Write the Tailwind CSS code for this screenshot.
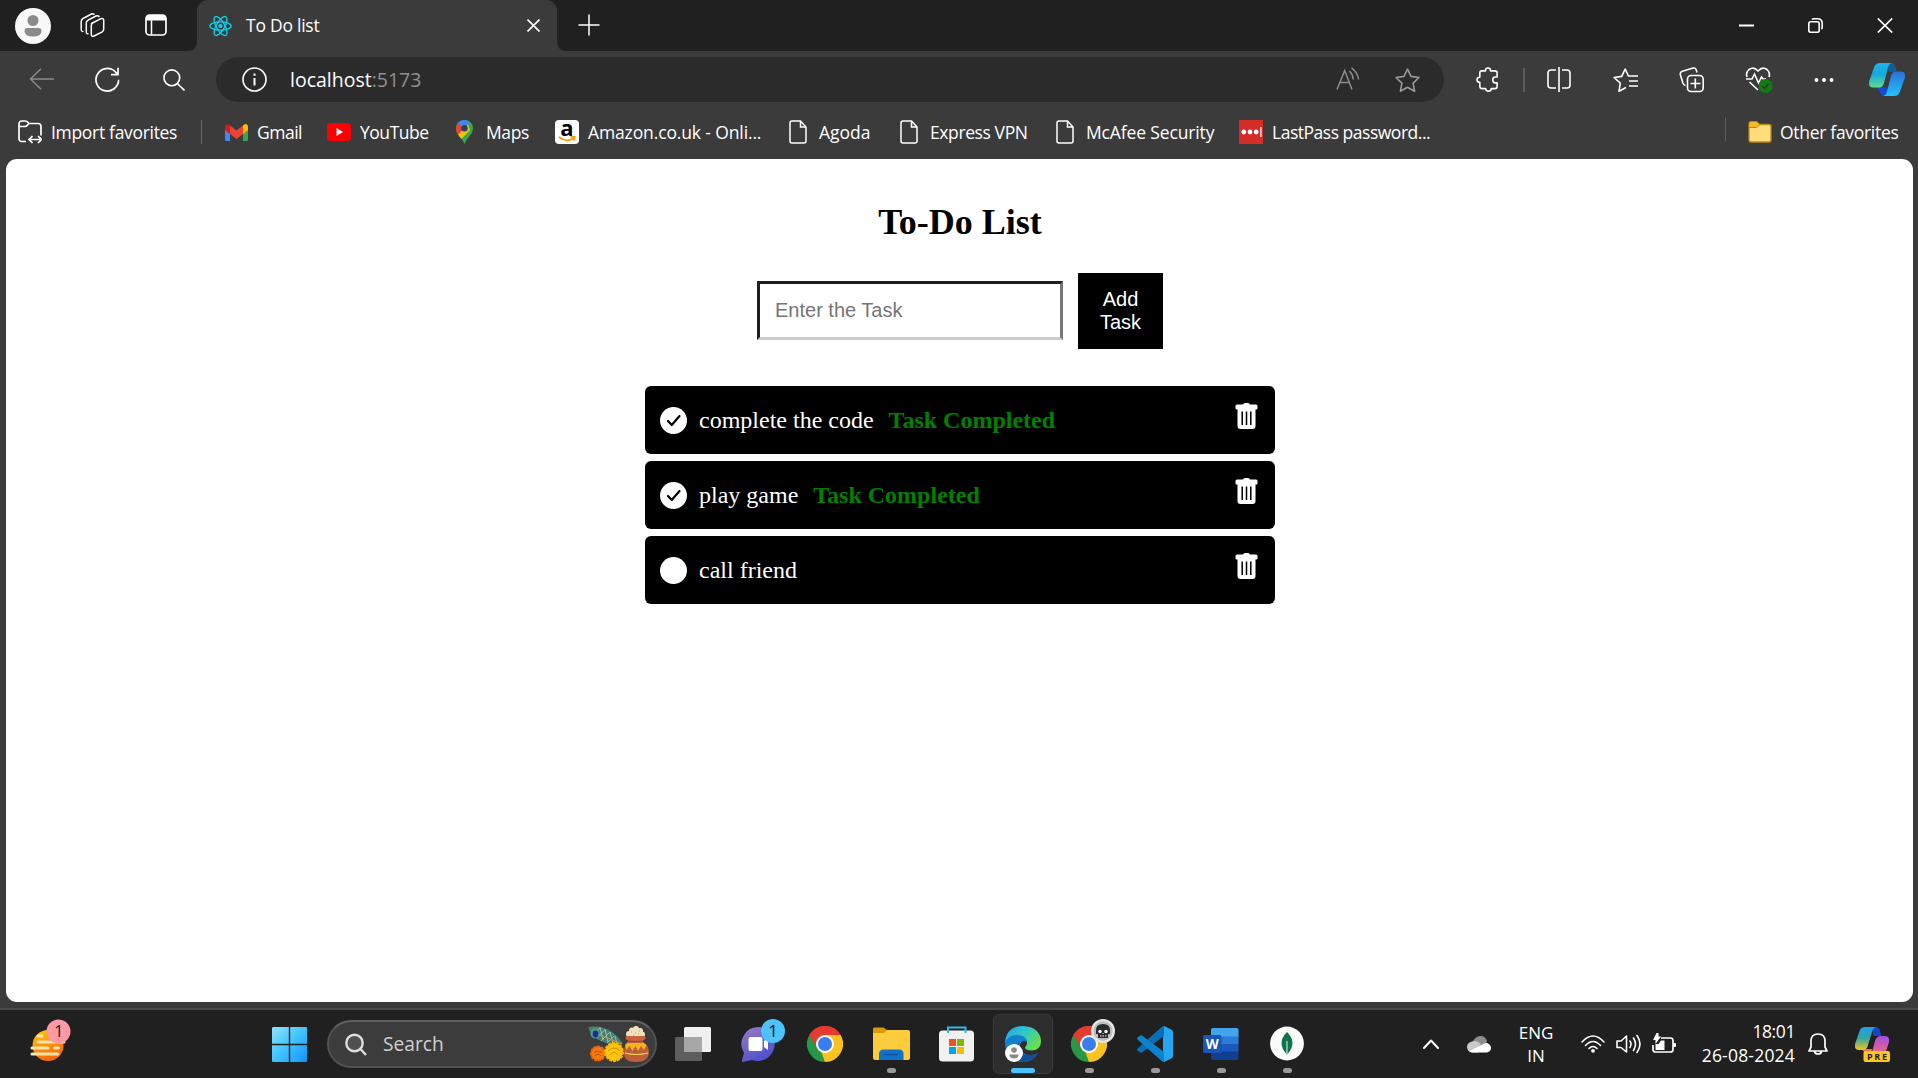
<!DOCTYPE html>
<html lang="en">
<head>
<meta charset="utf-8">
<title>To Do list</title>
<script src="https://cdn.jsdelivr.net/npm/@tailwindcss/browser@4"></script>
</head>
<body class="w-[1918px] h-[1078px] overflow-hidden flex flex-col bg-[#3b3b3b] text-white font-['Open_Sans','Noto_Sans',sans-serif] text-[17.5px]">

<svg class="hidden">
  <defs>
    <symbol id="file" viewBox="0 0 18 24"><path d="M3 1h8.500L17 7v14a2 2 0 0 1-2 2H3a2 2 0 0 1-2-2V3a2 2 0 0 1 2-2ZM11.500 1v6H17" fill="none" stroke="#fff" stroke-width="1.500"/></symbol>
    <symbol id="chrome" viewBox="0 0 36 36">
      <path d="M18 18 2.400 9A18 18 0 0 1 33.600 9Z" fill="#e33b2e"/>
      <path d="M18 18 33.600 9A18 18 0 0 1 18 36Z" fill="#fcc31e"/>
      <path d="M18 18V36A18 18 0 0 1 2.400 9Z" fill="#279847"/>
      <path d="M18 9h15.600L25.800 22.500Z" fill="#fcc31e"/><path d="M25.800 22.500 18 36l-4-11Z" fill="#fcc31e"/><path d="M10.200 22.500 2.400 9 14 9Z" fill="#279847"/><path d="M18 9H33.600A18 18 0 0 0 2.400 9L10.200 22.500Z" fill="#e33b2e"/>
      <circle cx="18" cy="18" r="9" fill="#fff"/><circle cx="18" cy="18" r="7" fill="#3b7ded"/>
    </symbol>
    <symbol id="trash" viewBox="0 0 23 26"><path d="M8 1.500Q8.500 0 10 0h3q1.500 0 2 1.500h6q1.500 0 1.500 1.500v2.500q0 1-1 1h-1V23q0 3-3 3h-12q-3 0-3-3V6.500h-1q-1 0-1-1V3q0-1.500 1.500-1.500Z" fill="#fff"/><path d="M7.200 8.500v13.500M11.500 8.500v13.500M15.800 8.500v13.500" stroke="#000" stroke-width="1.500"/></symbol>
    <symbol id="done" viewBox="0 0 27 27"><circle cx="13.500" cy="13.500" r="13.500" fill="#fff"/><path d="m8 14 3.800 4 7.700-9" fill="none" stroke="#000" stroke-width="2.200" stroke-linecap="round" stroke-linejoin="round"/></symbol>
  </defs>
</svg>

<!-- Tab strip -->
<header class="h-[51px] shrink-0 bg-[#202020] flex items-center">
  <svg class="ml-[15px] w-9 h-9 shrink-0" viewBox="0 0 36 36"><circle cx="18" cy="18" r="18" fill="#f8f8f8"/><circle cx="18" cy="12.500" r="5.500" fill="#8b8b8b"/><path d="M9.500 23q0-3 3-3h11q3 0 3 3 0 5.500-8.500 5.500T9.500 23Z" fill="#8b8b8b"/></svg>
  <svg class="ml-[29px] mb-px w-[25px] h-6 shrink-0" viewBox="0 0 25 24" fill="none" stroke="#fff" stroke-width="1.500" stroke-linejoin="round" stroke-linecap="round"><path d="m11.500 10.500 9-4.700q3-1 3.200 1.500v9q0 1.500-1.500 2.500L14 23q-2.500 1-2.700-1.500v-9q0-1.500 1.500-2.300Z"/><path d="M19 3.500Q18 2.200 16 3L8 7.200Q6.300 8 6.300 10v9.500q.2 1.300 1.700 1.200"/><path d="M14 1.300Q13 .5 11.500 1L3 5.500Q1.200 6.500 1.200 8.500v8.500q.2 1.500 1.700 1.500"/></svg>
  <svg class="ml-[40px] mb-px w-[22px] h-[22px] shrink-0" viewBox="0 0 22 22"><rect x="1" y="1" width="20" height="20" rx="3.500" fill="none" stroke="#fff" stroke-width="1.700"/><path d="M1 6.500V4q0-3 3-3h14q3 0 3 3v2.500Z" fill="#fff"/><path d="M6.500 6v15" stroke="#fff" stroke-width="1.500"/></svg>
  <div class="ml-5 w-[380px] h-[51px] flex items-center shrink-0">
    <svg class="w-2.5 h-[51px] shrink-0" viewBox="0 0 10 51"><path d="M0 51q10 0 10-10V51Z" fill="#3b3b3b"/></svg>
    <div class="w-[360px] h-full bg-[#3b3b3b] rounded-t-[11px] flex items-center">
      <svg class="ml-3 w-[23px] h-[22px]" viewBox="0 0 23 22" fill="none" stroke="#0fd0ee" stroke-width="1.300"><ellipse cx="11.500" cy="11" rx="10.700" ry="4.200"/><ellipse cx="11.500" cy="11" rx="10.700" ry="4.200" transform="rotate(60 11.500 11)"/><ellipse cx="11.500" cy="11" rx="10.700" ry="4.200" transform="rotate(120 11.500 11)"/><circle cx="11.500" cy="11" r="2.100" fill="#0fd0ee" stroke="none"/></svg>
      <span class="ml-[14px] pb-0.5 tracking-[-0.25px] leading-6 whitespace-nowrap">To Do list</span>
      <svg class="ml-auto mr-[17px] w-[13px] h-[13px]" viewBox="0 0 13 13"><path d="m.5.500 12 12M12.500.500l-12 12" stroke="#fff" stroke-width="1.600"/></svg>
    </div>
    <svg class="w-2.5 h-[51px] shrink-0" viewBox="0 0 10 51"><path d="M10 51Q0 51 0 41V51Z" fill="#3b3b3b"/></svg>
  </div>
  <svg class="ml-[11px] mb-0.5 w-[22px] h-[22px]" viewBox="0 0 22 22"><path d="M11 .5v21M.5 11h21" stroke="#fff" stroke-width="1.500"/></svg>
  <div class="ml-auto mr-[25px] mb-px flex items-center gap-[54px]">
    <svg class="w-[15px] h-[15px]" viewBox="0 0 15 15"><path d="M0 7.500h15" stroke="#fff" stroke-width="2"/></svg>
    <svg class="w-[15px] h-[15px]" viewBox="0 0 15 15" fill="none" stroke="#fff" stroke-width="1.600"><rect x=".8" y="3.800" width="10.400" height="10.400" rx="2"/><path d="M4 1.500Q4.500.8 6 .8h3.500q4.700 0 4.700 4.700V9q0 1.500-.8 2"/></svg>
    <svg class="w-[16px] h-[15px]" viewBox="0 0 16 15"><path d="m.8.500 14.400 14M15.200.500.8 14.500" stroke="#fff" stroke-width="1.700"/></svg>
  </div>
</header>

<!-- Toolbar -->
<nav class="h-[57px] shrink-0 flex items-center">
  <svg class="ml-[29px] mb-px w-[25px] h-[22px]" viewBox="0 0 25 22" fill="none" stroke="#8a8a8a" stroke-width="1.500"><path d="M25 11H1.500M12 .8 1.500 11 12 21.200"/></svg>
  <svg class="ml-[41px] w-[25px] h-[25px]" viewBox="0 0 25 25" fill="none" stroke="#fff" stroke-width="1.700"><path d="M23.600 12.800A11.300 11.300 0 1 1 20.500 5L23 7.500M23 .8v6.900h-7"/></svg>
  <svg class="ml-[43px] w-[22px] h-[22px]" viewBox="0 0 22 22" fill="none" stroke="#fff" stroke-width="1.600"><circle cx="8.800" cy="8.800" r="7.900"/><path d="m14.300 14.500 7.200 7"/></svg>
  <div class="ml-[31px] w-[1228px] h-[45px] rounded-full bg-[#2b2b2b] flex items-center">
    <svg class="ml-[26px] w-[25px] h-[25px]" viewBox="0 0 25 25" fill="none" stroke="#fff" stroke-width="1.600"><circle cx="12.500" cy="12.500" r="11.500"/><path d="M12.500 11v7.500M12.500 6.500v2.200" stroke-width="2"/></svg>
    <span class="ml-[23px] text-[19.5px] leading-none">localhost<span class="text-[#8f8f8f]">:5173</span></span>
    <svg class="ml-auto mb-0.5 w-[24px] h-[23px]" viewBox="0 0 24 23" fill="none" stroke="#8c8c8c" stroke-width="1.500"><path d="m1 22.500 7.700-19 7.300 19M3.700 15.500h9.700M13.500 4q3.500 3.500 3.800 8.500M15.500.8q6.500 5 7 11.700"/></svg>
    <svg class="ml-[35px] mr-6 w-[25px] h-[24px]" viewBox="0 0 25 24" fill="none" stroke="#9a9a9a" stroke-width="1.600" stroke-linejoin="round"><path d="m12.500 1 3.500 7.400 8 1.100-5.900 5.700 1.500 8-7.100-3.900-7.100 3.900 1.500-8L1 9.500l8-1.100Z"/></svg>
  </div>
  <svg class="ml-[32px] w-[24px] h-[25px]" viewBox="0 0 25 26" fill="none" stroke="#fff" stroke-width="1.600" stroke-linejoin="round"><path d="M4 6q0-2 2-2h4q-.5-3 2.500-3T15 4h4.500Q22 4 22 6v4.500h-2q-2.500 0-2.500 3t2.500 3h2V20q0 2.500-2.500 2.500H16q0 2.700-3 2.700t-3-2.700H6.500Q4 22.500 4 20v-4q-3 0-3-2.700t3-2.700Z"/></svg>
  <div class="ml-[23px] w-0.5 h-6 bg-[#5b5b5b]"></div>
  <svg class="ml-[22px] w-6 h-[25px]" viewBox="0 0 24 25" fill="none" stroke="#fff" stroke-width="1.600"><path d="M12 0v25M9 3H4Q1 3 1 6v12q0 3 3 3h5M15 3h5q3 0 3 3v12q0 3-3 3h-5"/></svg>
  <svg class="ml-[42px] w-[25px] h-[24px]" viewBox="0 0 25 24" fill="none" stroke="#fff" stroke-width="1.600" stroke-linejoin="round"><path d="m13 19.500-7 3.700 1.300-8L1 9.500l7.700-1.100L12.200 1l3.200 7H24M16 13h9M16 18h9M15 8h10" /></svg>
  <svg class="ml-[41px] w-[25px] h-[26px]" viewBox="0 0 25 26" fill="none" stroke="#fff" stroke-width="1.600"><rect x="8.500" y="8.500" width="15.700" height="16" rx="3.500"/><path d="M16.300 11.500v10M11.500 16.500h10M18 5.500l-.8-2.700q-.8-2.300-3-1.700L3.300 4.300Q.8 5 1.300 7.500l2.600 8.500q.8 2.300 2.600 2.500"/></svg>
  <svg class="ml-[41px] w-[28px] h-[26px]" viewBox="0 0 28 26" fill="none" stroke="#fff" stroke-width="1.600"><path d="M2 10Q.5 5.500 4 2.500q5-3.500 9 1.500 4.500-5 9-1.500 3.500 3 2 7.500M1 12h6l2.500-5 4 9 3-6 1.500 2h3M4.500 15l8.500 8"/><circle cx="20.500" cy="19" r="7" fill="#107c10" stroke="none"/><path d="m17.300 19.200 2.300 2.300 4-4.600" stroke="#333" stroke-width="1.500"/></svg>
  <svg class="ml-[41px] w-5 h-1.5" viewBox="0 0 20 6" fill="#fff"><circle cx="2.500" cy="3" r="2"/><circle cx="10" cy="3" r="2"/><circle cx="17.500" cy="3" r="2"/></svg>
  <svg class="ml-[35px] w-9 h-[33px]" viewBox="0 0 36 33"><defs><linearGradient id="cp1" x1="0" y1="0" x2="0" y2="1"><stop offset="0" stop-color="#1fb4ea"/><stop offset=".45" stop-color="#12a8dd"/><stop offset="1" stop-color="#5fdc8f"/></linearGradient><linearGradient id="cp2" x1="0" y1="0" x2="0" y2="1"><stop offset="0" stop-color="#2a6fd8"/><stop offset="1" stop-color="#22c3fb"/></linearGradient></defs><path d="M17 0h5q3.500 0 4.500 4l1.200 5H20Z" fill="#125d93"/><path d="M8.500 24h8l4 4-2 5h-3q-3.500 0-4.500-3.500Z" fill="#174ad8"/><path d="M11 0h12q-3 .5-4 4.500l-4 15.500q-1.200 4.500-5 4.500H4Q-1 24.500.3 18L5 4.500Q6.500 0 11 0Z" fill="url(#cp1)"/><path d="M25 33H14q3-.5 4-4.500L22 13q1.200-4.500 5-4.500h5q5 0 3.700 6.500L31 28.500Q29.500 33 25 33Z" fill="url(#cp2)"/></svg>
</nav>

<!-- Favorites bar -->
<nav class="h-[51px] shrink-0 flex items-center pb-[3px] whitespace-nowrap leading-6">
  <div class="ml-[18px] w-[183px] flex items-center gap-[9px] tracking-[-0.31px]">
    <svg class="w-6 h-6" viewBox="0 0 24 24" fill="none" stroke="#fff" stroke-width="1.700"><path d="M8 21.500H4q-3 0-3-3V4q0-3 3-3h3q2 0 3 1.500l1 1h9q3 0 3 3v9M1 6.500h6q1.500 0 2.500-1.500l1.500-1.500M12 19.500h11M14.500 16l-3.500 3.500 3.500 3.500M20 16l3.500 3.500L20 23"/></svg>
    <span class="pb-px">Import favorites</span>
  </div>
  <div class="w-px h-6 bg-[#666]"></div>
  <div class="ml-[23px] w-[102px] flex items-center gap-[9px] tracking-[-0.5px]">
    <svg class="w-[23px] h-[17px]" viewBox="0 0 23 17"><path d="M0 3v12.500Q0 17 1.500 17H5V6Z" fill="#4285f4"/><path d="M23 3v12.500q0 1.500-1.500 1.500H18V6Z" fill="#34a853"/><path d="M18 1.500 20 0q3 0 3 3v3l-5 4Z" fill="#fbbc04"/><path d="M5 1.500 3 0Q0 0 0 3v3l5 4Z" fill="#c5221f"/><path d="M3 0q1 0 2 1.500l6.500 5 6.500-5Q19 0 20 0l-2 1.500V10l-6.500 5L5 10V1.500Z" fill="#ea4335"/></svg>
    <span class="pb-px">Gmail</span>
  </div>
  <div class="w-[129px] flex items-center gap-[9px] tracking-[-0.47px]">
    <svg class="w-6 h-[18px]" viewBox="0 0 24 18"><rect width="24" height="18" rx="4" fill="#f00"/><path d="M9.500 5v8l6.500-4Z" fill="#fff"/></svg>
    <span class="pb-px">YouTube</span>
  </div>
  <div class="w-[99px] flex items-center gap-[13px] tracking-[-0.37px]">
    <svg class="w-[17px] h-6" viewBox="0 0 17 24"><path d="M8.500 0Q17 .5 17 8.500q0 3.500-3.500 7.500-3.500 4-5 8-1.500-4-4-6.500Q0 13 0 8.500 0 .5 8.500 0Z" fill="#34a853"/><path d="M2 14.500 12 4l2 6-8.500 9Q3 16.500 2 14.500Z" fill="#fbbc04"/><path d="M2 3Q0 5 0 8.500q0 3 2 6L8.500 8Z" fill="#ea4335"/><path d="M2 3q2.500-3 6.500-3 3 0 5.500 2L8 9Z" fill="#4285f4"/><circle cx="8.500" cy="8.300" r="3.200" fill="#2c3f67"/></svg>
    <span class="pb-px">Maps</span>
  </div>
  <div class="w-[234px] flex items-center gap-[9px] tracking-[-0.13px]">
    <span class="w-6 h-6 rounded bg-white text-black relative flex justify-center"><b class="text-[22px] leading-[15px] tracking-normal">a</b><svg class="absolute left-[3px] bottom-0.5 w-[18px] h-[6px]" viewBox="0 0 18 6" fill="none" stroke="#f90" stroke-width="1.700"><path d="M1 1q7 6 14 1.500M12.500 1l4-.2-1 4"/></svg></span>
    <span class="pb-px">Amazon.co.uk - Onli...</span>
  </div>
  <div class="w-[111px] flex items-center gap-3"><svg class="w-[18px] h-6"><use href="#file"/></svg><span class="pb-px">Agoda</span></div>
  <div class="w-[156px] flex items-center gap-3 tracking-[-0.4px]"><svg class="w-[18px] h-6"><use href="#file"/></svg><span class="pb-px">Express VPN</span></div>
  <div class="w-[183px] flex items-center gap-3 tracking-[-0.14px]"><svg class="w-[18px] h-6"><use href="#file"/></svg><span class="pb-px">McAfee Security</span></div>
  <div class="flex items-center gap-[9px] tracking-[-0.48px]">
    <svg class="w-6 h-6" viewBox="0 0 24 24"><path d="M0 0h24v24H0Z" fill="#d32d27"/><g fill="#fff"><circle cx="4.800" cy="12" r="2.400"/><circle cx="11" cy="12" r="2.400"/><circle cx="17.200" cy="12" r="2.400"/><path d="M21.300 7h1.200v10h-1.200Z"/></g></svg>
    <span class="pb-px">LastPass password...</span>
  </div>
  <div class="ml-auto mb-1.5 w-px h-6 bg-[#5c5c5c]"></div>
  <div class="ml-[22px] w-[170px] flex items-center gap-2 tracking-[-0.3px]">
    <svg class="w-6 h-[22px]" viewBox="0 0 24 22"><path d="M1 3q0-2.300 2-2.300h5q1 0 2 1.300l1.500 1.500H21q2 0 2 2V19q0 2-2 2H3q-2 0-2-2Z" fill="#ffdc7c" stroke="#b98a16" stroke-width="1.300"/><path d="M1.500 6V3q0-1.800 1.500-1.800h5Q9 1.200 10 2.500L11 4 9 6Z" fill="#f5b921"/><path d="M1 6.500h7.500L11.500 4" fill="none" stroke="#b98a16"/></svg>
    <span class="pb-px">Other favorites</span>
  </div>
</nav>

<!-- Page -->
<main class="ml-1.5 mr-[5px] h-[843px] shrink-0 rounded-[11px] bg-white text-black font-['Liberation_Serif',serif] flex flex-col items-center">
  <h2 class="mt-[43px] ml-px text-[36px] leading-[41px] font-bold">To-Do List</h2>
  <form class="mt-[30px] ml-px flex items-center gap-[15px] font-['Liberation_Sans',sans-serif] text-[20px]">
    <input class="mb-px w-[306px] h-[59px] border-[3px] border-t-[#1f1f1f] border-l-[#1f1f1f] border-r-[#767676] border-b-[#cbcbcb] pl-[15px] pb-px placeholder:text-[#757575] placeholder:opacity-100" placeholder="Enter the Task">
    <button type="button" class="w-[85px] h-[76px] bg-black text-white leading-[23px] px-4">Add Task</button>
  </form>
  <ul class="mt-[37px] ml-px w-[630px] flex flex-col gap-[7px] text-[24px] leading-7 text-white">
    <li class="h-[68px] rounded-md bg-black flex items-center pl-[15px] pr-[17px]"><svg class="w-[27px] h-[27px]"><use href="#done"/></svg><span class="ml-3">complete the code</span><b class="ml-[15px] text-[#008000]">Task Completed</b><svg class="ml-auto mb-2 w-[23px] h-[26px]"><use href="#trash"/></svg></li>
    <li class="h-[68px] rounded-md bg-black flex items-center pl-[15px] pr-[17px]"><svg class="w-[27px] h-[27px]"><use href="#done"/></svg><span class="ml-3">play game</span><b class="ml-[15px] text-[#008000]">Task Completed</b><svg class="ml-auto mb-2 w-[23px] h-[26px]"><use href="#trash"/></svg></li>
    <li class="h-[68px] rounded-md bg-black flex items-center pl-[15px] pr-[17px]"><span class="w-[27px] h-[27px] rounded-full bg-white"></span><span class="ml-3">call friend</span><svg class="ml-auto mb-2 w-[23px] h-[26px]"><use href="#trash"/></svg></li>
  </ul>
</main>

<!-- Taskbar -->
<footer class="mt-1.5 h-[70px] shrink-0 bg-[#202020] border-t-2 border-[#484848] flex items-center">
  <svg class="ml-[30px] mb-1.5 w-[42px] h-[50px] shrink-0" viewBox="0 0 42 50"><defs><linearGradient id="sun" x1="0" y1="0" x2=".4" y2="1"><stop offset="0" stop-color="#ffca0a"/><stop offset="1" stop-color="#f36a0c"/></linearGradient></defs><circle cx="18" cy="29.500" r="15.500" fill="url(#sun)"/><g stroke="#ffe2a8" stroke-width="3" stroke-linecap="round"><path d="M8 20h4M8 26h26M2 32h16M24.500 32h4M2 38h26"/></g><circle cx="28.500" cy="15.500" r="12" fill="#ff99a4"/><text x="28.800" y="21" text-anchor="middle" font-size="16" font-family="Open Sans" fill="#111">1</text></svg>
  <svg class="ml-[200px] w-[35px] h-[35px] shrink-0" viewBox="0 0 35 35"><defs><linearGradient id="win" x1="0" y1="0" x2="1" y2="1" gradientUnits="objectBoundingBox"><stop offset="0" stop-color="#8fe3ff"/><stop offset=".5" stop-color="#41c3fd"/><stop offset="1" stop-color="#0f93fb"/></linearGradient></defs><path d="M1 0h15.800v16.800H0V1ZM18.200 0H34q1 0 1 1v15.800H18.200ZM0 18.200h16.800V35H1q-1 0-1-1ZM18.200 18.200H35V34q0 1-1 1H18.200Z" fill="url(#win)"/></svg>
  <div class="ml-5 w-[330px] h-12 shrink-0 rounded-full bg-[#3c3c3c] border-2 border-[#515151] border-t-[#606060] flex items-center">
    <svg class="ml-4 w-[22px] h-[23px]" viewBox="0 0 22 23" fill="none" stroke="#dedede" stroke-width="2.400"><circle cx="9.500" cy="10" r="8.200" fill="#505050"/><path d="m15.500 16 5.500 6"/></svg>
    <span class="ml-4 text-[19.2px] leading-6 text-[#d0d0d0]">Search</span>
    <svg class="ml-auto mr-1.5 w-[61px] h-[36px]" viewBox="0 0 61 36"><path d="M0 1Q14-1 24 6q7 5 11 12-12 2-22-3Q3 11 0 1Z" fill="#478071"/><path d="m12 1 3 13m2-11 3 13m2-10 3 11m2-7 2 8M5 8l7-6m-4 10 9-8m-4 11 9-9m-3 11 7-7" stroke="#9bc7b1" stroke-width=".9"/><path d="m9 8 25 10" stroke="#c8894f" stroke-width="1.300"/><ellipse cx="7" cy="7.500" rx="4.500" ry="5" fill="#4f9d89"/><ellipse cx="7.500" cy="8" rx="2.800" ry="3.400" fill="#1d2c9b"/><circle cx="10" cy="27.500" r="7" fill="#f57a0d" stroke="#ee6407" stroke-width="2" stroke-dasharray="3 1"/><path d="M6 27q4-4 8 0m-7 3q3-4 6 0" stroke="#c54d05" fill="none"/><circle cx="26" cy="26" r="9" fill="#ffc60c" stroke="#fbb203" stroke-width="2" stroke-dasharray="3 1"/><path d="M20 25q6-6 12 0m-10 4q4-5 8 0" stroke="#df9000" fill="none"/><g fill="#f1e2bf"><circle cx="41" cy="8" r="3"/><circle cx="44" cy="4.500" r="3"/><circle cx="48" cy="3" r="3"/><circle cx="52" cy="5" r="3"/><circle cx="54" cy="8.500" r="3"/><path d="M41 5h12v6H41Z"/></g><path d="M43 6h1m3 1h1m3-2h1m-7 4h1m4-1h1" stroke="#bda67b"/><rect x="37.500" y="10" width="20" height="4" rx="2" fill="#cb633c"/><path d="M40 14h15l1 3q5 3 5 9 0 10-13 10T36 26q0-6 3-9Z" fill="#bd5f3a"/><path d="M39 17h17l2.500 2-2.500 5-3-4-3 5-2.500-5-3 5-3-5-3 4-1.500-5Z" fill="#f5b31c"/><path d="M37 27q11 3 23 0" stroke="#ffd45f" stroke-width="1.200" fill="none"/><path d="M40 15.500h15" stroke="#9c4a2b"/></svg>
  </div>

  <div class="ml-[3px] flex shrink-0 h-[60px]">
    <!-- Task view -->
    <div class="w-[66px] flex justify-center items-center"><svg class="w-9 h-[34px]" viewBox="0 0 36 34"><rect y="10" width="27" height="24" rx="1.500" fill="#5d5d5d"/><rect x="9" width="27" height="25" rx="1.500" fill="#f0f0f0"/><path d="M9 10h18v15H9Z" fill="#a6a6a6"/></svg></div>
    <!-- Chat -->
    <div class="w-[66px] flex justify-center items-center"><svg class="w-[44px] h-[46px] ml-[7px] mb-2" viewBox="0 0 44 46"><defs><linearGradient id="chat" x1="0" y1="0" x2=".5" y2="1"><stop offset="0" stop-color="#9a7bc4"/><stop offset="1" stop-color="#4f52cb"/></linearGradient></defs><path d="M17 10a17 17 0 1 1-6 33L2 45q-1.500 0-1-2l2-7A17 17 0 0 1 17 10Z" fill="url(#chat)"/><rect x="7.500" y="20" width="14" height="14" rx="2" fill="#fff"/><path d="m23 24 4-3v12l-4-3Z" fill="#fff"/><circle cx="32" cy="14" r="12" fill="#4cc2ff"/><text x="32" y="20" text-anchor="middle" font-size="17" font-family="Open Sans" fill="#111">1</text></svg></div>
    <!-- Chrome -->
    <div class="w-[66px] flex justify-center items-center"><svg class="w-9 h-9"><use href="#chrome"/></svg></div>
    <!-- File Explorer -->
    <div class="w-[66px] flex flex-col items-center pt-[13px]"><svg class="w-[37px] h-[34px]" viewBox="0 0 37 34"><path d="M0 2Q0 .5 1.500.5H10q1 0 2 1L15 4v6H0Z" fill="#dc9a05"/><path d="M0 6h11l3-3h21q2 0 2 2v26q0 2-2 2H2q-2 0-2-2Z" fill="#fdcc3c"/><path d="M6 33v-6q0-4.500 4.500-4.500h15.500q4.500 0 4.500 4.500v6Z" fill="#0f72cb"/><path d="M11.500 27.500h13" stroke="#0a519b" stroke-width="1.600" stroke-linecap="round"/></svg><i class="mt-[7px] w-[9px] h-[5px] rounded-full bg-[#9a9a9a]"></i></div>
    <!-- Store -->
    <div class="w-[66px] flex justify-center items-center"><svg class="w-[35px] h-[36px] mr-px" viewBox="0 0 35 36"><rect y="4.500" width="35" height="31" rx="3.500" fill="#f1f1f1"/><path d="M9 7V1.500h17.500V7" fill="none" stroke="#35b7ec" stroke-width="2"/><path d="M10 13h7v7h-7Z" fill="#f25022"/><path d="M18 13h7v7h-7Z" fill="#7fba00"/><path d="M10 21h7v7h-7Z" fill="#00a4ef"/><path d="M18 21h7v7h-7Z" fill="#ffb900"/></svg></div>
    <!-- Edge -->
    <div class="w-[66px] px-[3px]"><div class="h-[60px] rounded-md bg-[#2d2d2d] border border-[#3b3b3b] flex flex-col items-center pt-[11px]"><svg class="w-9 h-9 shrink-0" viewBox="0 0 36 36"><defs><linearGradient id="e1" x1="0" y1="0" x2="1" y2=".6"><stop offset="0" stop-color="#2c9fe4"/><stop offset=".5" stop-color="#2cc6cf"/><stop offset="1" stop-color="#67e04a"/></linearGradient></defs><path d="M0 17Q1 0 18 0q17 1 18 15 0 9-9 9.500-7 0-7-3 3-3 1.500-7Q17 7 0 17Z" fill="url(#e1)"/><path d="M0 17Q3 9 12 9q9 0 10 7-6-3-7 4-.500 8 9 9 5 .5 9-2-5 9-15 9Q1 35 0 17Z" fill="#1180cf"/><path d="M14 16q-3 14 12 13 4 0 7-2-5 9-15 9-7-1-8-9 0-7 4-11Z" fill="#124f97"/><circle cx="9" cy="27" r="9" fill="#fafafa"/><circle cx="9" cy="24" r="2.800" fill="#888"/><path d="M4.500 28.500h9q0 4-4.500 4t-4.500-4Z" fill="#888"/></svg><i class="mt-1.5 w-6 h-[5px] rounded-full bg-[#4cc2ff]"></i></div></div>
    <!-- Chrome, second profile -->
    <div class="w-[66px] relative flex flex-col items-center pt-3"><svg class="w-9 h-9"><use href="#chrome"/></svg><svg class="absolute left-[35px] top-[5px] w-6 h-6" viewBox="0 0 24 24"><circle cx="12" cy="12" r="12" fill="#e6e6e6"/><circle cx="12" cy="12" r="9.700" fill="#bdbdbd"/><path d="M5 11q0-6 7-6t7 6v4h-2v4H7v-4H5Z" fill="#2a2a2a"/><circle cx="9" cy="12.500" r="1.700" fill="#fff"/><circle cx="15" cy="12.500" r="1.700" fill="#fff"/><path d="M9 17h1.500m1 0H13m1 0h1.500M11.500 14.500h1" stroke="#fff"/></svg><i class="mt-1.5 w-[9px] h-[5px] rounded-full bg-[#9a9a9a]"></i></div>
    <!-- VS Code -->
    <div class="w-[66px] flex flex-col items-center pt-3"><svg class="w-9 h-9" viewBox="0 0 36 36"><path d="m27 0 8 4q1 .5 1 2v24q0 1.500-1 2l-8 4-1-1V1Z" fill="#25a6f2"/><path d="M27 0v10L5 26.500q-1 .5-2 0L.5 24.500q-1-1 0-2L25 .8Q26 0 27 0Z" fill="#0a6db5"/><path d="M27 36V26L5 9.500q-1-.5-2 0L.5 11.500q-1 1 0 2L25 35.200q1 .8 2 .8Z" fill="#0f82cf"/></svg><i class="mt-1.5 w-[9px] h-[5px] rounded-full bg-[#9a9a9a]"></i></div>
    <!-- Word -->
    <div class="w-[66px] flex flex-col items-center pt-3"><svg class="w-9 h-9" viewBox="0 0 36 36"><path d="M8 4q0-2 2-2h24q1.500 0 1.500 2v7H8Z" fill="#41a5ee"/><path d="M8 10.500h27.500V18H8Z" fill="#2b7cd3"/><path d="M8 18h27.500v8H8Z" fill="#185abd"/><path d="M8 25.500h27.500V32q0 2-1.500 2H10q-2 0-2-2Z" fill="#103f91"/><rect y="9" width="18.500" height="18" rx="1.800" fill="#1a56b8"/><text x="9.200" y="23.300" text-anchor="middle" font-size="14.500" font-weight="700" font-family="Open Sans" fill="#fff" textLength="13" lengthAdjust="spacingAndGlyphs">W</text></svg><i class="mt-1.5 w-[9px] h-[5px] rounded-full bg-[#9a9a9a]"></i></div>
    <!-- MongoDB Compass -->
    <div class="w-[66px] flex flex-col items-center pt-3"><svg class="w-9 h-9" viewBox="0 0 36 36"><circle cx="18" cy="17.500" r="16.900" fill="#fafafa"/><path d="M18 6q11 11 0 22.500Q7 17 18 6Z" fill="#10734b"/><path d="M18 15v14" stroke="#b7dac9" stroke-width="1.300"/></svg><i class="mt-1.5 w-[9px] h-[5px] rounded-full bg-[#9a9a9a]"></i></div>
  </div>

  <!-- System tray -->
  <svg class="ml-[103px] w-4 h-2.5 shrink-0" viewBox="0 0 16 10" fill="none" stroke="#fff" stroke-width="2" stroke-linecap="round" stroke-linejoin="round"><path d="m1 9 7-7.500L15 9"/></svg>
  <svg class="ml-7 w-6 h-[17px] shrink-0" viewBox="0 0 24 17"><path d="M6 5q3-5 8-5 4 0 6 5l-2 6H6Z" fill="#8e8e8e"/><path d="M6 16.500q-6-.5-6-5.500t7-6q5 0 7 4l-3 7.500Z" fill="#c9c9c9"/><path d="m2 15 12-5.500q3-3 6-2.500 4 1.500 4 5t-4 4.500H6q-2.500 0-4-1.500Z" fill="#fff"/></svg>
  <div class="ml-[22px] w-[46px] shrink-0 text-center text-[17px] leading-[23px]">ENG<br>IN</div>
  <svg class="ml-[22px] w-6 h-[18px] shrink-0" viewBox="0 0 24 18" fill="none" stroke="#fff" stroke-width="1.600" stroke-linecap="round"><path d="M1 7Q12-5 23 7M4.500 10.500q7.500-8 15 0M8 13.500q4-4 8 0"/><circle cx="12" cy="15.800" r="1.900" fill="#fff" stroke="none"/></svg>
  <svg class="ml-[11px] w-[25px] h-5 shrink-0" viewBox="0 0 25 20" fill="none" stroke="#fff" stroke-width="1.600" stroke-linejoin="round" stroke-linecap="round"><path d="M1 7h4l5.500-5v16L5 13.500H1ZM14 7q2 3 0 6.500M17.500 4q4 6 0 12.500M21 1.500q6 8.500 0 17"/></svg>
  <svg class="ml-[11px] w-6 h-5 shrink-0 mb-[3px]" viewBox="0 0 24 20" fill="none" stroke="#fff" stroke-width="1.700"><path d="M9 5h9.500Q21 5 21 7.500v9q0 2.500-2.500 2.500h-15Q1 19 1 16.500V12"/><path d="M21.500 10H23q1 0 1 1v2q0 1-1 1h-1.500Z" fill="#fff" stroke="none"/><path d="M3.500 11h3L9 7.500h3.500v9.500h-9Z" fill="#fff" stroke="none"/><path d="M4.500 0h2v3.500H9L3.500 11V7H1Z" fill="#fff" stroke="none"/></svg>
  <div class="ml-[20px] w-[99px] shrink-0 text-right leading-6 pb-0.5"><div class="tracking-[-0.4px]">18:01</div><div class="tracking-[0.2px]">26-08-2024</div></div>
  <svg class="ml-[13px] w-5 h-[22px] shrink-0" viewBox="0 0 20 22" fill="none" stroke="#fff" stroke-width="1.700" stroke-linejoin="round"><path d="M3 14V8q0-7 7-7t7 7v6l2 4H1ZM6.500 18.500q.5 2.500 3.500 2.500t3.500-2.500"/></svg>
  <svg class="ml-[27px] w-[35px] h-[35px] shrink-0" viewBox="0 0 35 35"><defs><linearGradient id="pc1" x1="0" y1="0" x2="0" y2="1"><stop offset="0" stop-color="#1ba0ee"/><stop offset=".5" stop-color="#35a7a3"/><stop offset="1" stop-color="#f5c51c"/></linearGradient><linearGradient id="pc2" x1="0" y1="0" x2="0" y2="1"><stop offset="0" stop-color="#a64be8"/><stop offset="1" stop-color="#fb6e68"/></linearGradient></defs><path d="M16 0h5q3 0 4 4l1.200 5H19Z" fill="#1746c4"/><path d="M7 22h10l-1 7h-3q-3 0-4-4Z" fill="#f76a4d"/><path d="M10 0h11q-3 1-4 5l-4 13q-1 5-5 5H4q-5 0-4-6L4.500 4Q6 0 10 0Z" fill="url(#pc1)"/><path d="M24 29H14q2-1 3-4l3-11q1.500-5 6-5h4q5 0 4 6l-3.500 11Z" fill="url(#pc2)"/><rect x="8.500" y="24" width="26.500" height="11" rx="2" fill="#ffc91b"/><text x="22" y="32.800" text-anchor="middle" font-size="9" font-weight="700" font-family="Open Sans" fill="#1a1a1a" textLength="20">PRE</text></svg>
</footer>
</body>
</html>
